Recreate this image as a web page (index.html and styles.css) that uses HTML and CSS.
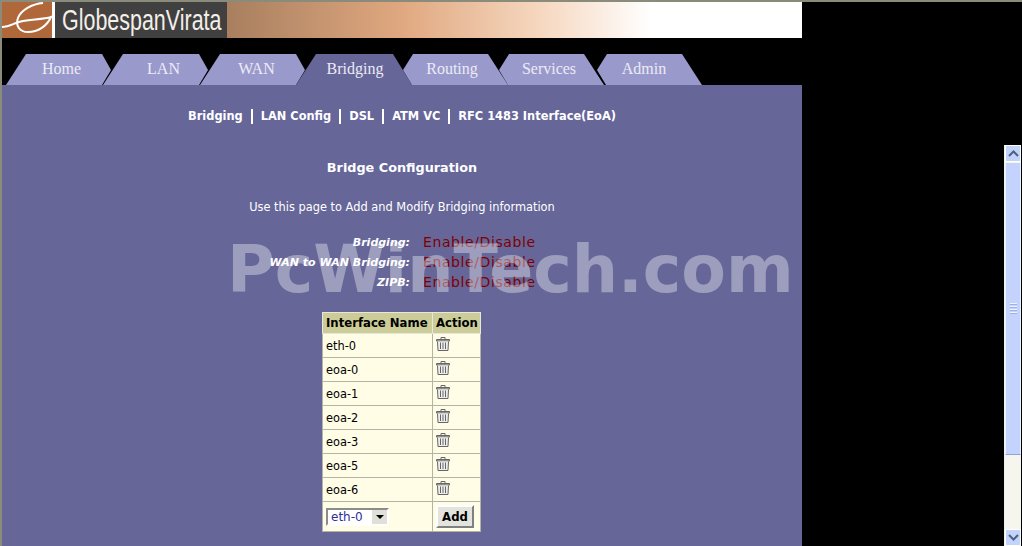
FILE: index.html
```html
<html>

<head>
  <title>Bridge Configuration</title>
  <link rel="stylesheet" href="styles.css">
</head>

<body>
  <div class="page">
    <div class="main">
      <div class="banner">
        <div class="logo-mark">
          <svg width="50" height="36" viewBox="0 0 50 36">
            <path d="M41 1 C30 2 19 8 16 16 C13 24 18 30 26 30 C36 30 45 24 49 15 C40 18 22 17 14 21 C9 23 5 25 0 25" fill="none" stroke="#fff" stroke-width="2"/>
          </svg>
        </div>
        <div class="logo-name"><span>GlobespanVirata</span></div>
      </div>

      <ul class="tabs">
        <li class="tab tab-home">Home</li>
        <li class="tab tab-lan">LAN</li>
        <li class="tab tab-wan">WAN</li>
        <li class="tab tab-bridging active">Bridging</li>
        <li class="tab tab-routing">Routing</li>
        <li class="tab tab-services">Services</li>
        <li class="tab tab-admin">Admin</li>
      </ul>

      <div class="panel">
        <div class="subnav">
          <a>Bridging</a><i></i><a>LAN Config</a><i></i><a>DSL</a><i></i><a>ATM VC</a><i></i><a>RFC 1483 Interface(EoA)</a>
        </div>
        <h2>Bridge Configuration</h2>
        <p class="intro">Use this page to Add and Modify Bridging information</p>

        <div class="options">
          <span class="opt-label">Bridging:</span><span class="opt-value">Enable/Disable</span>
          <span class="opt-label">WAN to WAN Bridging:</span><span class="opt-value">Enable/Disable</span>
          <span class="opt-label">ZIPB:</span><span class="opt-value">Enable/Disable</span>
        </div>

        <table class="iface" cellspacing="0">
          <tr>
            <th class="col-name">Interface Name</th>
            <th>Action</th>
          </tr>
          <tr><td>eth-0</td><td><svg class="trash" viewBox="0 0 14 14"><use href="#trash"/></svg></td></tr>
          <tr><td>eoa-0</td><td><svg class="trash" viewBox="0 0 14 14"><use href="#trash"/></svg></td></tr>
          <tr><td>eoa-1</td><td><svg class="trash" viewBox="0 0 14 14"><use href="#trash"/></svg></td></tr>
          <tr><td>eoa-2</td><td><svg class="trash" viewBox="0 0 14 14"><use href="#trash"/></svg></td></tr>
          <tr><td>eoa-3</td><td><svg class="trash" viewBox="0 0 14 14"><use href="#trash"/></svg></td></tr>
          <tr><td>eoa-5</td><td><svg class="trash" viewBox="0 0 14 14"><use href="#trash"/></svg></td></tr>
          <tr><td>eoa-6</td><td><svg class="trash" viewBox="0 0 14 14"><use href="#trash"/></svg></td></tr>
          <tr class="add-row">
            <td>
              <div class="select">
                <span class="select-text">eth-0</span>
                <span class="select-btn"></span>
              </div>
            </td>
            <td><button class="add-btn">Add</button></td>
          </tr>
        </table>
      </div>
    </div>

    <div class="scrollbar">
      <div class="sb-btn">
        <svg width="13" height="9" viewBox="0 0 13 9"><path d="M2 7 L6.5 2.5 L11 7" fill="none" stroke="#4d6185" stroke-width="2"/></svg>
      </div>
      <div class="sb-thumb">
        <span></span><span></span><span></span><span></span>
      </div>
      <div class="sb-track"></div>
      <div class="sb-btn">
        <svg width="13" height="9" viewBox="0 0 13 9"><path d="M2 2 L6.5 6.5 L11 2" fill="none" stroke="#4d6185" stroke-width="2"/></svg>
      </div>
    </div>

    <div class="watermark">PcWinTech.com</div>
  </div>

  <svg class="defs" width="0" height="0">
    <symbol id="trash" viewBox="0 0 14 14">
      <path d="M5 2 V0.5 H9 V2" fill="none" stroke="#666" stroke-width="1"/>
      <path d="M0.5 2.5 H13.5 V4 H0.5 Z" fill="#bbb" stroke="#666" stroke-width="1"/>
      <path d="M1.5 4.5 L2 13.5 H12 L12.5 4.5" fill="#eee" stroke="#666" stroke-width="1"/>
      <path d="M4.5 5.5 V12 M7 5.5 V12 M9.5 5.5 V12" fill="none" stroke="#666" stroke-width="1"/>
    </symbol>
  </svg>
</body>

</html>
```

FILE: styles.css
```css
html, body {
  margin: 0;
  padding: 0;
  height: 100%;
  overflow: hidden;
  background: #000;
}

.page {
  position: relative;
  display: flex;
  height: 546px;
  box-sizing: border-box;
  border-top: 2px solid #8b8b7c;
  border-left: 2px solid #8b8b7c;
  font-family: "DejaVu Sans", Verdana, sans-serif;
}

.main {
  width: 800px;
  display: flex;
  flex-direction: column;
}

/* banner */
.banner {
  height: 36px;
  display: flex;
  background: linear-gradient(to right, #a87f5f 0, #a87f5f 225px, #e0a880 400px, #f6d8c0 540px, #fff 650px);
}

.logo-mark {
  width: 50px;
  height: 36px;
  background: #b0683a;
  border-right: 3px solid #fff;
}

.logo-name {
  width: 172px;
  height: 36px;
  box-sizing: border-box;
  padding-left: 7px;
  overflow: hidden;
  background: #404040;
  color: #f4efe8;
  font-family: "Liberation Sans", sans-serif;
  font-size: 29px;
  line-height: 36px;
}

.logo-name span {
  display: inline-block;
  transform: scaleX(0.74);
  transform-origin: left center;
}

/* tabs */
.tabs {
  list-style: none;
  display: flex;
  height: 31px;
  margin: 16px 0 0 4px;
  padding: 0;
}

.tab {
  height: 31px;
  box-sizing: border-box;
  background: #9999cc;
  color: #ecebf5;
  font-family: "Liberation Serif", serif;
  font-size: 16px;
  line-height: 30px;
  text-align: center;
}

.tab.active {
  background: #666699;
}

.tab-home, .tab-lan, .tab-wan {
  width: 105px;
  margin-right: -8px;
  padding-left: 6px;
  clip-path: polygon(0 31px, 20px 0, 96px 0, 105px 16px, 96px 31px);
}

.tab-lan { padding-left: 16px; }
.tab-wan { margin-right: -9px; padding-left: 8px; }

.tab-bridging {
  width: 116px;
  margin-right: -9px;
  padding-left: 2px;
  clip-path: polygon(0 31px, 20px 0, 97px 0, 116px 31px);
}

.tab-routing, .tab-services, .tab-admin {
  width: 105px;
  margin-right: -9px;
  clip-path: polygon(9px 31px, 0 16px, 10px 0, 85px 0, 105px 31px);
}

.tab-routing { padding-right: 7px; }
.tab-services { margin-right: -7px; padding-right: 5px; }
.tab-admin { padding-right: 11px; }

/* panel */
.panel {
  flex: 1;
  background: #666699;
  color: #fff;
}

.subnav {
  display: flex;
  justify-content: center;
  align-items: center;
  gap: 8px;
  margin-top: 23px;
  height: 16px;
  font-size: 11.4px;
  font-weight: bold;
}

.subnav i {
  width: 2px;
  height: 15px;
  background: #fff;
}

h2 {
  margin: 35px 0 0;
  font-size: 12.8px;
  line-height: 18px;
  text-align: center;
}

.intro {
  margin: 22px 0 0;
  font-size: 11.4px;
  line-height: 16px;
  text-align: center;
}

.options {
  display: grid;
  grid-template-columns: 408px auto;
  column-gap: 13px;
  grid-auto-rows: 20px;
  margin-top: 17px;
  align-items: center;
}

.opt-label {
  text-align: right;
  font-size: 11px;
  font-weight: bold;
  font-style: italic;
}

.opt-value {
  color: #800000;
  font-size: 14px;
  letter-spacing: 0.6px;
}

/* table */
.iface {
  margin: 20px 0 0 320px;
  width: 159px;
  border-collapse: collapse;
  table-layout: fixed;
  color: #000;
  font-size: 11.4px;
  background: #fffde6;
}

.iface th, .iface td {
  border: 1px solid #b3b3a6;
  padding: 0 3px;
  text-align: left;
  white-space: nowrap;
}

.iface th {
  height: 21px;
  background: #cccc99;
  border-color: #e8e8d8;
  font-size: 11.7px;
}

.iface .col-name {
  width: 103px;
}

.iface td {
  height: 24px;
}

.iface .add-row td {
  height: 30px;
}

.trash {
  display: block;
  width: 14px;
  height: 14px;
  margin: -3px 0 0 0;
}

.defs {
  position: absolute;
}

.select {
  display: flex;
  width: 63px;
  height: 18px;
  box-sizing: border-box;
  border: 2px solid;
  border-color: #8c8c8c #fff #fff #8c8c8c;
  background: #fff;
  color: #2f2f9a;
  font-size: 12px;
  line-height: 14px;
}

.select-text {
  flex: 1;
  padding-left: 3px;
}

.select-btn {
  position: relative;
  width: 15px;
  background: #e0e0d8;
}

.select-btn::after {
  content: "";
  position: absolute;
  top: 5px;
  left: 4px;
  border: 4px solid transparent;
  border-top-color: #000;
  border-bottom: 0;
}

.add-btn {
  display: block;
  width: 38px;
  height: 23px;
  padding: 0;
  border: 2px solid;
  border-color: #fff #808080 #808080 #fff;
  background: #e4e4de;
  font-family: "DejaVu Sans", Verdana, sans-serif;
  font-size: 11.7px;
  font-weight: bold;
  color: #000;
}

/* scrollbar */
.scrollbar {
  width: 16px;
  margin: 143px 1px 0 auto;
  border-left: 1px solid #f0f0f0;
  background: #f6f5ee;
  display: flex;
  flex-direction: column;
  align-items: stretch;
}

.sb-btn {
  height: 15px;
  flex: none;
  display: flex;
  align-items: center;
  justify-content: center;
  background: #c4d3fa;
  border: 1px solid #fff;
}

.sb-thumb {
  height: 291px;
  margin-top: 1px;
  display: flex;
  flex-direction: column;
  align-items: center;
  justify-content: center;
  gap: 1px;
  background: #c4d3fd;
  border-left: 1px solid #eef2ff;
  border-right: 1px solid #eef2ff;
  border-bottom: 1px solid #8fa4d8;
}

.sb-thumb span {
  width: 7px;
  height: 1px;
  background: #eef3ff;
  border-bottom: 1px solid #9db2e6;
}

.sb-track {
  flex: 1;
}

/* watermark on top of everything */
.watermark {
  position: absolute;
  left: 225px;
  top: 232px;
  color: #fff;
  opacity: 0.36;
  font-size: 65px;
  font-weight: bold;
  line-height: 72px;
  white-space: nowrap;
}
```
